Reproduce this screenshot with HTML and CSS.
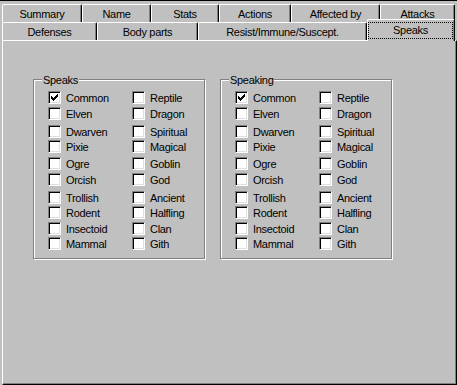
FILE: index.html
```html
<!DOCTYPE html>
<html lang="en">
<head>
    <meta charset="UTF-8">
    <title>Speaks</title>
    <link rel="stylesheet" href="styles.css">
</head>
<body>
    <div class="window">
        <!-- Две строки вкладок -->
        <div class="tab-row back">
            <div class="tab">Summary</div>
            <div class="tab">Name</div>
            <div class="tab">Stats</div>
            <div class="tab">Actions</div>
            <div class="tab">Affected by</div>
            <div class="tab">Attacks</div>
        </div>
        <div class="tab-row front">
            <div class="tab">Defenses</div>
            <div class="tab">Body parts</div>
            <div class="tab">Resist/Immune/Suscept.</div>
            <div class="tab active"><span class="focus">Speaks</span></div>
        </div>

        <div class="panel">
            <div class="group">
                <span class="group-title">Speaks</span>
                <div class="checks" id="speaks"></div>
            </div>
            <div class="group">
                <span class="group-title">Speaking</span>
                <div class="checks" id="speaking"></div>
            </div>
        </div>
    </div>

    <script>
        const languages = [
            "Common", "Reptile", "Elven", "Dragon", "Dwarven", "Spiritual",
            "Pixie", "Magical", "Ogre", "Goblin", "Orcish", "God",
            "Trollish", "Ancient", "Rodent", "Halfling", "Insectoid", "Clan",
            "Mammal", "Gith"
        ];
        const tick = '<svg width="11" height="11" viewBox="0 0 11 11"><path d="M2 4H3V5H4V6H5V5H6V4H7V3H8V2H9V5H8V6H7V7H6V8H5V9H4V8H3V7H2Z" fill="#000"/></svg>';

        // Заполнение обоих списков
        function fill(id, checked) {
            document.getElementById(id).innerHTML = languages
                .map(name => `<label class="check"><span class="box">${name === checked ? tick : ''}</span>${name}</label>`)
                .join('');
        }

        fill('speaks', 'Common');
        fill('speaking', 'Common');
    </script>
</body>
</html>
```

FILE: styles.css
```css
body {
    margin: 0;
    background-color: #c0c0c0;
    font-family: 'Liberation Sans', Arial, sans-serif;
    font-size: 11px;
    letter-spacing: -0.3px;
    color: #000;
}
.window {
    width: 457px;
    height: 385px;
    box-sizing: border-box;
    border-top: 1px solid #000;
    padding: 3px 0 0 2px;
    display: flex;
    flex-direction: column;
}
.tab-row {
    display: grid;
    height: 18px;
}
.back {
    grid-template-columns: 80px 69px 68px 72px 89px 75px;
}
.front {
    grid-template-columns: 95px 101px 169px 88px;
}
.tab {
    border-top: 1px solid #fff;
    border-left: 1px solid #fff;
    border-right: 1px solid #000;
    border-radius: 2px 2px 0 0;
    box-shadow: inset -1px 0 #808080;
    display: flex;
    align-items: center;
    justify-content: center;
    white-space: nowrap;
    background-color: #c0c0c0;
}
.tab.active {
    position: relative;
    z-index: 1;
    margin-top: -3px;
    height: 22px;
    box-sizing: border-box;
    align-items: flex-start;
}
.focus {
    margin: 2px 1px 0 0;
    height: 17px;
    line-height: 15px;
    flex: 1;
    text-align: center;
    box-sizing: border-box;
    border: 1px dotted #000;
}
.panel {
    flex: 1;
    border-top: 1px solid #fff;
    border-left: 1px solid #fff;
    border-right: 1px solid #000;
    border-bottom: 1px solid #000;
    box-shadow: inset -1px -1px #808080;
    padding: 38px 0 0 30px;
    display: flex;
    gap: 15px;
    align-items: flex-start;
}
.group {
    position: relative;
    width: 172px;
    height: 180px;
    box-sizing: border-box;
    border: 1px solid #808080;
    box-shadow: inset 1px 1px #fff, 1px 1px #fff;
    padding: 11px 0 0 14px;
}
.group-title {
    position: absolute;
    top: -6px;
    left: 8px;
    padding: 0 1px;
    line-height: 13px;
    background-color: #c0c0c0;
}
.checks {
    display: grid;
    grid-template-columns: 84px auto;
    grid-template-rows: 16px 18px 15px 17px 16px 18px 15px 16px 15px 13px;
}
.check {
    display: flex;
    align-items: center;
    gap: 5px;
    height: 13px;
}
.box {
    width: 13px;
    height: 13px;
    box-sizing: border-box;
    background-color: #fff;
    border-top: 1px solid #808080;
    border-left: 1px solid #808080;
    border-right: 1px solid #fff;
    border-bottom: 1px solid #fff;
    box-shadow: inset 1px 1px #000, inset -1px -1px #dfdfdf;
}
.box svg {
    display: block;
}
```
